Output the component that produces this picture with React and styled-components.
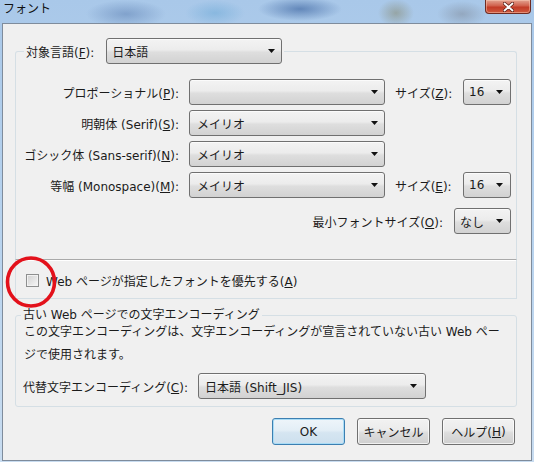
import React from 'react';
import styled, { createGlobalStyle } from 'styled-components';

const GlobalStyle = createGlobalStyle`
  html, body {
    margin: 0;
    padding: 0;
    background: #fff;
  }
  body {
    font-family: "DejaVu Sans", "Noto Sans CJK JP", sans-serif;
    font-size: 12px;
    color: #1b1b1b;
  }
`;

const Window = styled.div`
  position: relative;
  box-sizing: border-box;
  width: 534px;
  height: 462px;
  display: flex;
  flex-direction: column;
  padding: 0 2px 1px 2px;
  overflow: hidden;
  background:
    radial-gradient(ellipse 40px 14px at 126px 14px, rgba(95, 130, 180, 0.55), transparent),
    radial-gradient(ellipse 30px 13px at 215px 13px, rgba(110, 170, 215, 0.55), transparent),
    radial-gradient(ellipse 42px 12px at 300px 9px, rgba(60, 100, 160, 0.65), transparent),
    radial-gradient(ellipse 18px 14px at 396px 13px, rgba(130, 130, 100, 0.5), transparent),
    radial-gradient(ellipse 25px 13px at 462px 14px, rgba(125, 135, 150, 0.5), transparent),
    linear-gradient(#a9c8e9, #b6d2ee 45%, #c8dcf0);
`;

const TitleBar = styled.div`
  height: 23px;
  display: flex;
  align-items: flex-start;
  flex-shrink: 0;
`;

const Title = styled.span`
  padding-left: 1px;
  line-height: 19px;
  font-size: 12px;
  color: #111;
`;

const CloseButton = styled.div`
  margin-left: auto;
  margin-right: 1px;
  width: 46px;
  height: 14px;
  display: flex;
  align-items: center;
  justify-content: center;
  box-sizing: border-box;
  border: 1px solid #6e2b22;
  border-top: none;
  border-radius: 0 0 4px 4px;
  background: linear-gradient(#e3a391, #d0604c 45%, #c23b27 55%, #cf5a3f);
  box-shadow: inset 0 0 0 1px rgba(255, 210, 190, 0.45);
`;

const Client = styled.div`
  flex: 1;
  display: flex;
  flex-direction: column;
  border: 1px solid #7f8c9c;
  background: #f0f0f0;
`;

const Group = styled.fieldset`
  margin: ${p => p.$mt}px 14px 0 12px;
  padding: ${p => p.$pad};
  min-width: 0;
  border: 1px solid #d5dfe5;
  border-radius: 3px;
`;

const FontGroup = styled(Group)`
  border-bottom-color: #a9a9a9;
  border-radius: 3px 3px 0 0;
`;

const ComboLegend = styled.legend`
  display: flex;
  align-items: center;
  gap: 12px;
  margin-left: 2px;
  padding: 0 2px;
`;

const TextLegend = styled.legend`
  margin-left: -2px;
  padding: 0 2px;
  line-height: 16px;
`;

const FontGrid = styled.div`
  display: grid;
  grid-template-columns: 157px 196px 58px 48px;
  column-gap: 10px;
  row-gap: 5px;
  align-items: center;
`;

const Label = styled.span`
  white-space: nowrap;
  justify-self: ${p => (p.$right ? 'end' : 'start')};
`;

const MinRow = styled.div`
  grid-column: 1 / -1;
  display: flex;
  justify-content: flex-end;
  align-items: center;
  gap: 11px;
  margin-top: 5px;
`;

const Combo = styled.div`
  box-sizing: border-box;
  width: ${p => p.$w}px;
  height: 26px;
  display: flex;
  align-items: center;
  padding: 0 ${p => p.$pr || 6}px 0 ${p => p.$pl || 6}px;
  border: 1px solid #707070;
  border-radius: 3px;
  background: linear-gradient(#f3f3f3, #ececec 45%, #dedede 55%, #d2d2d2);
  box-shadow: inset 0 1px 0 #fbfbfb;
`;

const ComboValue = styled.span`
  flex: 1;
  white-space: nowrap;
  overflow: hidden;
`;

const CheckPanel = styled.div`
  box-sizing: border-box;
  height: 39px;
  margin: 0 14px 0 12px;
  padding: 3px 0 0 10px;
  display: flex;
  align-items: center;
  gap: 7px;
  border: 1px solid #d5dfe5;
  border-top: none;
  box-shadow: inset 0 1px 0 #fff;
`;

const CheckBox = styled.span`
  box-sizing: border-box;
  width: 13px;
  height: 13px;
  border: 1px solid #8e8f8f;
  background: linear-gradient(135deg, #d0d0d0, #f7f7f7);
  box-shadow: inset 0 0 0 1px #f2f2f2;
`;

const Desc = styled.p`
  margin: -2px 0 0 1px;
  line-height: 23px;
  white-space: nowrap;
`;

const EncRow = styled.div`
  display: flex;
  align-items: center;
  gap: 10px;
  margin-top: 6px;
`;

const ButtonRow = styled.div`
  display: flex;
  justify-content: flex-end;
  gap: 12px;
  margin: 11px 16px 0 0;
`;

const Button = styled.div`
  box-sizing: border-box;
  width: 73px;
  height: 27px;
  display: flex;
  align-items: center;
  justify-content: center;
  border: 1px solid ${p => (p.$default ? '#3c7fb1' : '#707070')};
  border-radius: 3px;
  background: ${p =>
    p.$default
      ? 'linear-gradient(#eef5fa, #e3eef6 45%, #d5e5f1 55%, #cde0ee)'
      : 'linear-gradient(#f2f2f2, #ebebeb 45%, #dddddd 55%, #cfcfcf)'};
  box-shadow: ${p =>
    p.$default ? 'inset 0 0 0 1px #a9dcf6' : 'inset 0 0 0 1px rgba(255,255,255,0.7)'};
`;

const Mark = styled.svg`
  position: absolute;
  left: 5px;
  top: 256px;
  pointer-events: none;
`;

const Arrow = () => (
  <svg width="7" height="4" viewBox="0 0 7 4">
    <path d="M0 0 H7 L3.5 4 Z" fill="#111" />
  </svg>
);

const Select = ({ w, value, pl, pr }) => (
  <Combo $w={w} $pl={pl} $pr={pr}>
    <ComboValue>{value}</ComboValue>
    <Arrow />
  </Combo>
);

const fontRows = [
  { label: 'プロポーショナル', key: 'P', value: '', size: 'Z' },
  { label: '明朝体 (Serif)', key: 'S', value: 'メイリオ' },
  { label: 'ゴシック体 (Sans-serif)', key: 'N', value: 'メイリオ' },
  { label: '等幅 (Monospace)', key: 'M', value: 'メイリオ', size: 'E' },
];

export default function App() {
  return (
    <>
      <GlobalStyle />
      <Window>
        <TitleBar>
          <Title>フォント</Title>
          <CloseButton>
            <svg width="11" height="10" viewBox="0 0 11 10">
              <path d="M1.5 1.5 L9.5 8.5 M9.5 1.5 L1.5 8.5" stroke="#5a2018" strokeWidth="3.4" strokeLinecap="round" />
              <path d="M1.5 1.5 L9.5 8.5 M9.5 1.5 L1.5 8.5" stroke="#fff" strokeWidth="1.8" strokeLinecap="round" />
            </svg>
          </CloseButton>
        </TitleBar>

        <Client>
          <FontGroup $mt={14} $pad="15px 5px 25px 6px">
            <ComboLegend>
              <Label>対象言語(<u>F</u>):</Label>
              <Select w={176} value="日本語" pl={5} />
            </ComboLegend>
            <FontGrid>
              {fontRows.map(row => (
                <React.Fragment key={row.key}>
                  <Label $right>
                    {row.label}(<u>{row.key}</u>):
                  </Label>
                  <Select w={196} value={row.value} pl={7} />
                  {row.size ? (
                    <>
                      <Label>サイズ(<u>{row.size}</u>):</Label>
                      <Select w={48} value="16" pl={5} pr={7} />
                    </>
                  ) : (
                    <>
                      <span />
                      <span />
                    </>
                  )}
                </React.Fragment>
              ))}
              <MinRow>
                <Label>最小フォントサイズ(<u>O</u>):</Label>
                <Select w={57} value="なし" pl={5} pr={7} />
              </MinRow>
            </FontGrid>
          </FontGroup>

          <CheckPanel>
            <CheckBox />
            <span>Web ページが指定したフォントを優先する(<u>A</u>)</span>
          </CheckPanel>

          <Group $mt={8} $pad="0 6px 7px 7px">
            <TextLegend>古い Web ページでの文字エンコーディング</TextLegend>
            <Desc>
              この文字エンコーディングは、文字エンコーディングが宣言されていない古い Web ペー
              <br />
              ジで使用されます。
            </Desc>
            <EncRow>
              <Label>代替文字エンコーディング(<u>C</u>):</Label>
              <Select w={228} value="日本語 (Shift_JIS)" pl={6} pr={8} />
            </EncRow>
          </Group>

          <ButtonRow>
            <Button $default>OK</Button>
            <Button>キャンセル</Button>
            <Button>ヘルプ(<u>H</u>)</Button>
          </ButtonRow>
        </Client>

        <Mark width="54" height="54" viewBox="0 0 54 54">
          <ellipse cx="26" cy="26" rx="23.5" ry="24" fill="none" stroke="#e3111b" strokeWidth="3.6" />
        </Mark>
      </Window>
    </>
  );
}
